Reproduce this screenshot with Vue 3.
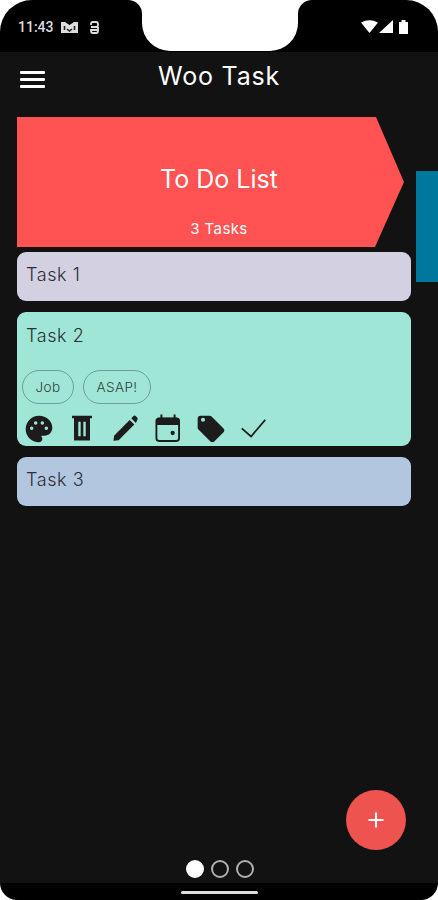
<script setup>
import { ref } from 'vue'

const tasks = ref([
  { id: 1, title: 'Task 1', color: '#d3d0e1' },
  { id: 2, title: 'Task 2', color: '#a0e6d6', open: true, tags: ['Job', 'ASAP!'] },
  { id: 3, title: 'Task 3', color: '#b3c6e0' },
])
</script>

<template>
  <div class="phone">
    <div class="status">
      <div class="status-left">
        <span class="time">11:43</span>
        <svg class="ic-m" width="17" height="13" viewBox="0 0 17 13">
          <path d="M0 1h4l4.500 3L13 1h4v11H0z" fill="#ddd" />
          <path d="M3.500 5v4M13.500 5v4M6 8l2.500 2L11 8" fill="none" stroke="#222" stroke-width="1.600" />
        </svg>
        <svg class="ic-s" width="11" height="13" viewBox="0 0 11 13">
          <path d="M2 4V3q0-2 2-2h3q2 0 2 2v1q0 2-2 2H2M9 6v4q0 2-2 2H4q-2 0-2-2V9h7" fill="none" stroke="#ddd" stroke-width="1.800" />
        </svg>
      </div>
      <div class="notch"></div>
      <div class="status-right">
        <svg width="17" height="13" viewBox="0 0 17 13"><path d="M0 2.500Q8.500-2 17 2.500L8.500 13z" fill="#fff" /></svg>
        <svg class="ic-signal" width="14" height="13" viewBox="0 0 14 13"><path d="M14 0v13H0z" fill="#fff" /></svg>
        <svg class="ic-batt" width="9" height="14" viewBox="0 0 9 14"><path d="M0 2h2.500V0h4v2H9v12H0z" fill="#fff" /></svg>
      </div>
    </div>

    <div class="screen">
      <header class="topbar">
        <button class="menu" aria-label="Menu"><span></span><span></span><span></span></button>
        <h1>Woo Task</h1>
      </header>

      <div class="board">
        <section class="column">
          <div class="col-head">
            <div class="col-title">To Do List</div>
            <div class="col-count">3 Tasks</div>
          </div>
          <div class="task-list">
            <article v-for="t in tasks" :key="t.id" class="task" :class="{ open: t.open }" :style="{ background: t.color }">
              <div class="task-title">{{ t.title }}</div>
              <template v-if="t.open">
                <div class="chips">
                  <span v-for="tag in t.tags" :key="tag" class="chip">{{ tag }}</span>
                </div>
                <div class="actions">
                  <!-- palette -->
                  <svg width="32" height="32" viewBox="0 0 24 24"><path fill-rule="evenodd" d="M12 2C6.490 2 2 6.490 2 12s4.490 10 10 10c1.380 0 2.500-1.120 2.500-2.500 0-.61-.23-1.200-.64-1.670-.08-.1-.13-.21-.13-.33 0-.28.220-.5.500-.5H16c3.310 0 6-2.690 6-6 0-4.960-4.490-9-10-9zM6.500 12.800a1.300 1.300 0 1 1 0-2.600 1.300 1.300 0 0 1 0 2.600zm3-4a1.300 1.300 0 1 1 0-2.600 1.300 1.300 0 0 1 0 2.600zm5 0a1.300 1.300 0 1 1 0-2.600 1.300 1.300 0 0 1 0 2.600zm3 4a1.300 1.300 0 1 1 0-2.600 1.300 1.300 0 0 1 0 2.600z" /></svg>
                  <!-- trash -->
                  <svg width="32" height="32" viewBox="0 0 24 24"><path fill-rule="evenodd" d="M4.500 2h15v2H18v16.700H6V4H4.500zM9.200 6.500v11h1.800v-11zm3.800 0v11h1.800v-11z" /></svg>
                  <!-- pencil -->
                  <svg width="32" height="32" viewBox="0 0 24 24"><path d="M3.400 20.800L3.800 17 15.500 5.200 19 8.700 7.200 20.500z" /><path d="M16.700 4l1.900-1.900q.6-.4 1.200 0l1.500 1.500q.4.6 0 1.200L20.200 7.500z" /></svg>
                  <!-- calendar -->
                  <svg width="32" height="32" viewBox="0 0 24 24"><path d="M5.500 3.500h13q2 0 2 2V9h-17V5.500q0-2 2-2zM6.300 1.200h1.500v3H6.300zM16.200 1.200h1.500v3h-1.500z" /><rect x="3.300" y="4" width="17" height="17" rx="2" fill="none" stroke="#1c1c1c" stroke-width="1.400" /><circle cx="15.500" cy="15" r="1.600" /></svg>
                  <!-- tag -->
                  <svg width="32" height="32" viewBox="0 0 24 24"><path d="M21.410 11.580l-9-9C12.050 2.220 11.550 2 11 2H4c-1.100 0-2 .9-2 2v7c0 .55.220 1.050.59 1.420l9 9c.36.36.86.58 1.410.58.55 0 1.050-.22 1.410-.59l7-7c.37-.36.59-.86.59-1.410 0-.55-.23-1.060-.59-1.420zM6 6.500C5.170 6.500 4.500 5.830 4.500 5S5.170 3.500 6 3.500 7.500 4.170 7.500 5 6.830 6.500 6 6.500z" /></svg>
                  <!-- check -->
                  <svg width="32" height="32" viewBox="0 0 24 24"><path d="M2.800 11.500l7 6.100L20.400 5.200" fill="none" stroke="#1c1c1c" stroke-width="1.300" /></svg>
                </div>
              </template>
            </article>
          </div>
        </section>
        <div class="next-col"></div>
      </div>

      <div class="spacer"></div>

      <div class="dots">
        <span class="dot on"></span>
        <span class="dot"></span>
        <span class="dot"></span>
      </div>

      <button class="fab" aria-label="Add">
        <svg width="18" height="18" viewBox="0 0 18 18"><path d="M9 1.500v15M1.500 9h15" stroke="#fff" stroke-width="2" /></svg>
      </button>
    </div>

    <div class="navbar"><span class="home"></span></div>
  </div>
</template>

<style scoped>
.phone {
  width: 438px;
  height: 900px;
  display: flex;
  flex-direction: column;
  overflow: hidden;
  font-family: Inter, "Open Sans", sans-serif;
  background: #fff;
}

.status {
  height: 52px;
  flex: none;
  display: flex;
  color: #ddd;
}
.status-left {
  width: 142px;
  padding: 19px 0 0 18px;
  box-sizing: border-box;
  display: flex;
  align-items: flex-start;
  gap: 5px;
  background: #000;
  border-radius: 32px 14px 0 0;
}
.time {
  font-size: 14px;
  font-weight: 500;
  line-height: 16px;
  font-family: Roboto, sans-serif;
}
.ic-m {
  margin: 2px 0 0 2px;
}
.ic-s {
  margin: 2px 0 0 6px;
}
.notch {
  width: 156px;
  height: 52px;
  background: #000;
}
.notch::before {
  content: "";
  display: block;
  height: 51px;
  background: #fff;
  border-radius: 0 0 28px 28px;
}
.status-right {
  flex: 1;
  display: flex;
  justify-content: flex-end;
  padding: 20px 30px 0 0;
  align-items: flex-start;
  background: #000;
  border-radius: 14px 32px 0 0;
}
.ic-signal {
  margin-left: 1px;
}
.ic-batt {
  margin-left: 6px;
}

.screen {
  position: relative;
  flex: 1;
  display: flex;
  flex-direction: column;
  background: #121212;
}

.topbar {
  height: 52px;
  display: flex;
  justify-content: center;
}
.topbar h1 {
  margin: 0;
  font-size: 25px;
  font-weight: 400;
  letter-spacing: .8px;
  line-height: 48px;
  color: #fff;
}
.menu {
  position: absolute;
  left: 20px;
  top: 19px;
  width: 25px;
  padding: 0;
  border: 0;
  background: none;
  display: flex;
  flex-direction: column;
  gap: 4px;
}
.menu span {
  height: 3px;
  border-radius: 1px;
  background: #fff;
}

.board {
  display: flex;
  gap: 5px;
  padding: 13px 0 0 17px;
}
.column {
  width: 394px;
  flex: none;
}
.col-head {
  width: 387px;
  height: 130px;
  box-sizing: border-box;
  background: #ff5252;
  clip-path: polygon(0 0, 359px 0, 100% 50%, 358px 100%, 0 100%);
  color: #fff;
  display: flex;
  flex-direction: column;
  align-items: center;
  padding: 44px 0 0 17px;
}
.col-title {
  font-size: 25px;
  line-height: 36px;
}
.col-count {
  margin-top: 22px;
  font-size: 15px;
  letter-spacing: .4px;
  line-height: 20px;
}
.next-col {
  width: 22px;
  height: 111px;
  margin-top: 54px;
  background: #00789e;
}

.task-list {
  margin-top: 5px;
  display: flex;
  flex-direction: column;
  gap: 11px;
}
.task {
  min-height: 49px;
  box-sizing: border-box;
  border-radius: 9px;
  padding: 11px 9px 0;
  color: #2c2e34;
}
.task-title {
  font-size: 18px;
  font-weight: 300;
  letter-spacing: .6px;
  line-height: 24px;
}
.task.open {
  height: 134px;
}
.task.open .task-title {
  padding-top: 1px;
}
.chips {
  display: flex;
  gap: 9px;
  margin: 22px 0 0 -4px;
}
.chip {
  height: 34px;
  box-sizing: border-box;
  padding: 0 12.500px;
  display: flex;
  align-items: center;
  border: 1px solid #6f9e94;
  border-radius: 17px;
  font-size: 13.500px;
  letter-spacing: .4px;
  font-weight: 300;
  color: #2f3f3a;
}
.actions {
  display: flex;
  gap: 11px;
  margin: 9px 0 0 -3px;
}
.actions svg {
  fill: #1c1c1c;
  flex: none;
}

.spacer {
  flex: 1;
}
.dots {
  display: flex;
  justify-content: center;
  gap: 7px;
  padding: 0 0 5px 1px;
}
.dot {
  width: 18px;
  height: 18px;
  box-sizing: border-box;
  border: 2.500px solid #b0b0b0;
  border-radius: 50%;
}
.dot.on {
  background: #fff;
  border-color: #fff;
}
.fab {
  position: absolute;
  right: 32px;
  bottom: 33px;
  width: 60px;
  height: 60px;
  padding: 0;
  border: 0;
  border-radius: 50%;
  background: #ef5350;
  display: flex;
  align-items: center;
  justify-content: center;
}

.navbar {
  height: 17px;
  flex: none;
  background: #000;
  border-radius: 0 0 18px 18px;
  display: flex;
  justify-content: center;
  padding-top: 8px;
  box-sizing: border-box;
}
.home {
  width: 77px;
  height: 3px;
  border-radius: 2px;
  background: #ddd;
}
</style>
